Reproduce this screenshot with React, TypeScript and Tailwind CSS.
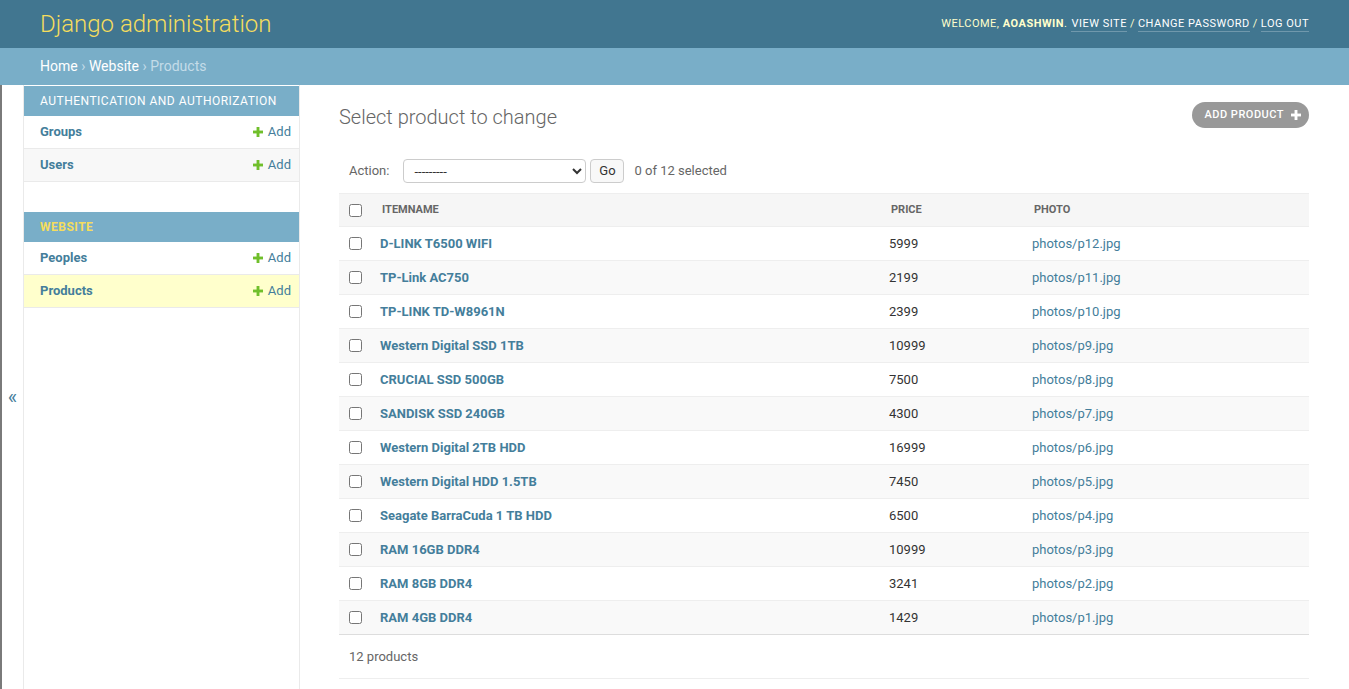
import React from "react";

const products: [string, string, string][] = [
  ["D-LINK T6500 WIFI", "5999", "photos/p12.jpg"],
  ["TP-Link AC750", "2199", "photos/p11.jpg"],
  ["TP-LINK TD-W8961N", "2399", "photos/p10.jpg"],
  ["Western Digital SSD 1TB", "10999", "photos/p9.jpg"],
  ["CRUCIAL SSD 500GB", "7500", "photos/p8.jpg"],
  ["SANDISK SSD 240GB", "4300", "photos/p7.jpg"],
  ["Western Digital 2TB HDD", "16999", "photos/p6.jpg"],
  ["Western Digital HDD 1.5TB", "7450", "photos/p5.jpg"],
  ["Seagate BarraCuda 1 TB HDD", "6500", "photos/p4.jpg"],
  ["RAM 16GB DDR4", "10999", "photos/p3.jpg"],
  ["RAM 8GB DDR4", "3241", "photos/p2.jpg"],
  ["RAM 4GB DDR4", "1429", "photos/p1.jpg"],
];

function Plus({ color, size = 10 }: { color: string; size?: number }) {
  return (
    <svg width={size} height={size} viewBox="0 0 14 14" className="shrink-0">
      <rect x="5" y="0" width="4" height="14" fill={color} />
      <rect x="0" y="5" width="14" height="4" fill={color} />
    </svg>
  );
}

function ModelRow({ name, alt, current }: { name: string; alt?: boolean; current?: boolean }) {
  const bg = current ? "bg-[#ffffcc]" : alt ? "bg-[#f8f8f8]" : "bg-white";
  return (
    <div className={`flex items-center justify-between h-[33px] border-b border-[#eaeaea] pl-[16px] pr-[8px] ${bg}`}>
      <span className="text-[13px] font-bold text-[#447e9b]">{name}</span>
      <span className="flex items-center gap-[5px] text-[13px] text-[#447e9b]">
        <Plus color="#70bf2b" />
        Add
      </span>
    </div>
  );
}

export default function App() {
  return (
    <div
      className="h-screen flex flex-col overflow-hidden bg-white text-[#333]"
      style={{ fontFamily: "Roboto, 'Liberation Sans', Arial, sans-serif" }}
    >
      {/* Header */}
      <div className="h-[48px] shrink-0 bg-[#417690] flex items-center justify-between px-[40px]">
        <div className="text-[24px] font-light text-[#f5dd5d] leading-none">Django administration</div>
        <div className="text-[11px] tracking-[0.5px] uppercase text-[#ffffcc] flex items-center">
          <span>
            Welcome, <strong className="font-bold">aoashwin</strong>.
          </span>
          <span className="ml-[4px] text-white border-b border-white/25 leading-[14px]">View site</span>
          <span className="mx-[3px]">/</span>
          <span className="text-white border-b border-white/25 leading-[14px]">Change password</span>
          <span className="mx-[3px]">/</span>
          <span className="text-white border-b border-white/25 leading-[14px]">Log out</span>
        </div>
      </div>

      {/* Breadcrumbs */}
      <div className="h-[37px] shrink-0 bg-[#79aec8] flex items-center px-[40px] text-[14px] text-[#c4dce8]">
        <span className="text-white">Home</span>
        <span className="mx-[3.5px]">›</span>
        <span className="text-white">Website</span>
        <span className="mx-[3.5px]">›</span>
        <span>Products</span>
      </div>

      {/* Main */}
      <div className="flex flex-1 min-h-0">
        {/* Toggle */}
        <div className="w-[24px] shrink-0 border-l-2 border-l-[#7a7a7a] border-r border-r-[#eaeaea] flex justify-center pt-[300px]">
          <span className="text-[20px] leading-[24px] text-[#447e9b]">«</span>
        </div>

        {/* Sidebar */}
        <div className="w-[276px] shrink-0 border-r border-[#eaeaea] pt-px">
          <div className="mb-[30px]">
            <div className="h-[30px] bg-[#79aec8] flex items-center pl-[16px] text-[12px] tracking-[0.5px] uppercase text-white">
              Authentication and Authorization
            </div>
            <ModelRow name="Groups" />
            <ModelRow name="Users" alt />
          </div>
          <div>
            <div className="h-[30px] bg-[#79aec8] flex items-center pl-[16px] text-[12px] tracking-[0.5px] uppercase text-[#f5dd5d] font-bold">
              Website
            </div>
            <ModelRow name="Peoples" />
            <ModelRow name="Products" current />
          </div>
        </div>

        {/* Content */}
        <div className="flex-1 min-w-0 pl-[39px] pr-[40px] pt-[17px]">
          <div className="flex items-start justify-between">
            <h1 className="mt-[2px] text-[20px] leading-[26px] font-light text-[#666]">Select product to change</h1>
            <div className="h-[26px] rounded-[15px] bg-[#999] flex items-center pl-[12px] pr-[8px] gap-[7px]">
              <span className="text-[11px] font-medium tracking-[0.5px] uppercase text-white">Add product</span>
              <Plus color="#ffffff" />
            </div>
          </div>

          {/* Actions */}
          <div className="mt-[25px] h-[32px] flex items-center pl-[10px] text-[13px] text-[#666]">
            <span>Action:</span>
            <select className="ml-[14px] w-[183px] h-[24px] border border-[#ccc] rounded-[4px] text-[13px] text-[#333] bg-white pl-[6px]">
              <option>---------</option>
            </select>
            <button className="ml-[4px] h-[24px] w-[34px] border border-[#ccc] rounded-[4px] bg-[#f8f8f8] text-[13px] text-[#333]">
              Go
            </button>
            <span className="ml-[10px]">0 of 12 selected</span>
          </div>

          {/* Table */}
          <div className="mt-[6px]">
            <div className="grid grid-cols-[33px_509px_143px_1fr] h-[34px] items-center bg-[#f6f6f6] border-y border-[#eeeeee] text-[11px] font-bold uppercase text-[#666]">
              <div className="pl-[10px] flex items-center">
                <input type="checkbox" className="m-0 w-[13px] h-[13px]" />
              </div>
              <div className="pl-[10px]">Itemname</div>
              <div className="pl-[10px]">Price</div>
              <div className="pl-[10px]">Photo</div>
            </div>
            {products.map(([name, price, photo], i) => (
              <div
                key={photo}
                className={`grid grid-cols-[33px_509px_143px_1fr] h-[34px] items-center border-b ${
                  i === products.length - 1 ? "border-[#dddddd]" : "border-[#eeeeee]"
                } text-[13px] ${i % 2 === 1 ? "bg-[#f9f9f9]" : "bg-white"}`}
              >
                <div className="pl-[10px] flex items-center">
                  <input type="checkbox" className="m-0 w-[13px] h-[13px]" />
                </div>
                <div className="pl-[8px] font-bold text-[#447e9b]">{name}</div>
                <div className="pl-[8px] text-[#333]">{price}</div>
                <div className="pl-[8px] text-[#447e9b]">{photo}</div>
              </div>
            ))}
            <div className="h-[44px] flex items-center pl-[10px] border-b border-[#eeeeee] text-[13px] text-[#666]">
              12 products
            </div>
          </div>
        </div>
      </div>
    </div>
  );
}
